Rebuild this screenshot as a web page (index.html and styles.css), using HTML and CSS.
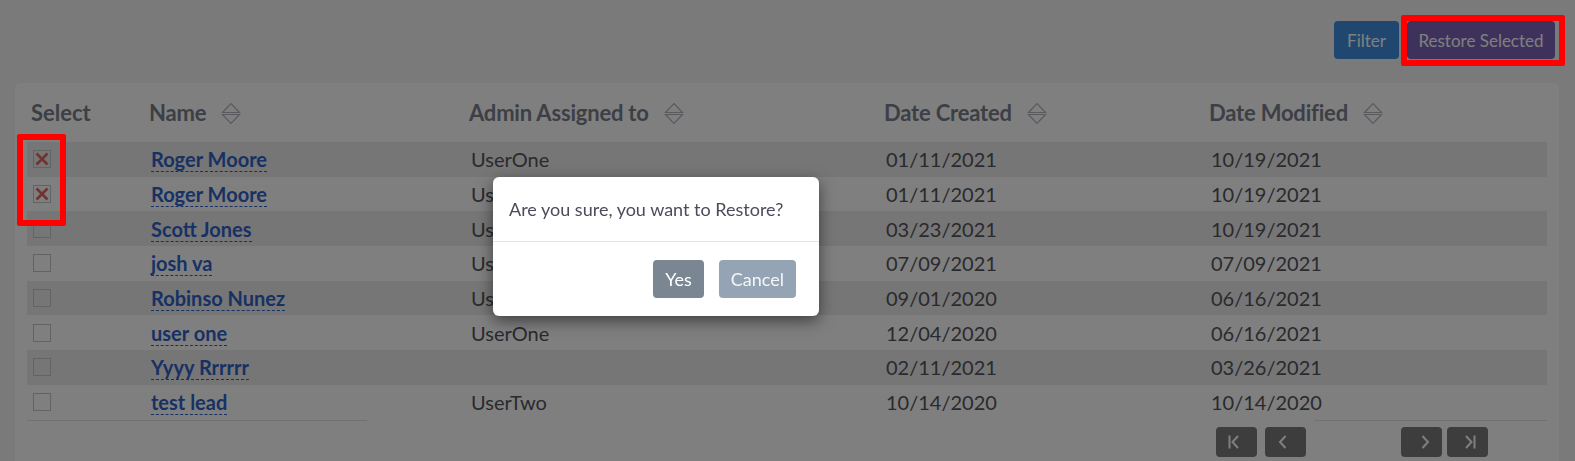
FILE: index.html
```html
<!DOCTYPE html>
<html lang="en">
<head>
<meta charset="utf-8">
<title>Deleted Leads</title>
<link rel="stylesheet" href="styles.css">
</head>
<body>
<div class="page">
  <div class="toolbar">
    <button class="btn btn-filter">Filter</button>
    <button class="btn btn-restore">Restore Selected</button>
  </div>
  <div class="card">
    <table class="grid">
      <colgroup>
        <col class="c-sel"><col class="c-name"><col class="c-admin"><col class="c-created"><col class="c-mod">
      </colgroup>
      <thead>
        <tr>
          <th class="th-sel">Select</th>
          <th><span class="th-in">Name<svg class="sort" viewBox="0 0 20 23"><path d="M1.5 10.5L10 1.5l8.5 9z M1.5 12.5L10 21.5l8.5-9z"/></svg></span></th>
          <th><span class="th-in">Admin Assigned to<svg class="sort" viewBox="0 0 20 23"><path d="M1.5 10.5L10 1.5l8.5 9z M1.5 12.5L10 21.5l8.5-9z"/></svg></span></th>
          <th><span class="th-in">Date Created<svg class="sort" viewBox="0 0 20 23"><path d="M1.5 10.5L10 1.5l8.5 9z M1.5 12.5L10 21.5l8.5-9z"/></svg></span></th>
          <th><span class="th-in">Date Modified<svg class="sort" viewBox="0 0 20 23"><path d="M1.5 10.5L10 1.5l8.5 9z M1.5 12.5L10 21.5l8.5-9z"/></svg></span></th>
        </tr>
      </thead>
      <tbody>
        <tr>
          <td class="td-sel"><span class="cb checked"><svg viewBox="0 0 16 16"><path d="M2.5 2.5l11 11M13.5 2.5l-11 11"/></svg></span></td>
          <td class="td-name"><a class="lnk" href="#">Roger Moore</a></td>
          <td>UserOne</td><td>01/11/2021</td><td>10/19/2021</td>
        </tr>
        <tr>
          <td class="td-sel"><span class="cb checked"><svg viewBox="0 0 16 16"><path d="M2.5 2.5l11 11M13.5 2.5l-11 11"/></svg></span></td>
          <td class="td-name"><a class="lnk" href="#">Roger Moore</a></td>
          <td>UserOne</td><td>01/11/2021</td><td>10/19/2021</td>
        </tr>
        <tr>
          <td class="td-sel"><span class="cb"></span></td>
          <td class="td-name"><a class="lnk" href="#">Scott Jones</a></td>
          <td>UserOne</td><td>03/23/2021</td><td>10/19/2021</td>
        </tr>
        <tr>
          <td class="td-sel"><span class="cb"></span></td>
          <td class="td-name"><a class="lnk" href="#">josh va</a></td>
          <td>UserOne</td><td>07/09/2021</td><td>07/09/2021</td>
        </tr>
        <tr>
          <td class="td-sel"><span class="cb"></span></td>
          <td class="td-name"><a class="lnk" href="#">Robinso Nunez</a></td>
          <td>UserOne</td><td>09/01/2020</td><td>06/16/2021</td>
        </tr>
        <tr>
          <td class="td-sel"><span class="cb"></span></td>
          <td class="td-name"><a class="lnk" href="#">user one</a></td>
          <td>UserOne</td><td>12/04/2020</td><td>06/16/2021</td>
        </tr>
        <tr>
          <td class="td-sel"><span class="cb"></span></td>
          <td class="td-name"><a class="lnk" href="#">Yyyy Rrrrrr</a></td>
          <td></td><td>02/11/2021</td><td>03/26/2021</td>
        </tr>
        <tr>
          <td class="td-sel"><span class="cb"></span></td>
          <td class="td-name"><a class="lnk" href="#">test lead</a></td>
          <td>UserTwo</td><td>10/14/2020</td><td>10/14/2020</td>
        </tr>
      </tbody>
    </table>
    <div class="foot">
      <div class="rules"><span class="rule rule-l"></span><span class="rule rule-r"></span></div>
      <div class="pager">
        <button class="pg pg-first"><svg viewBox="0 0 14 14"><path d="M2.5 0.5v13M11 1L5.5 7l5.5 6"/></svg></button>
        <button class="pg pg-prev"><svg viewBox="0 0 14 14"><path d="M9.5 1L4 7l5.5 6"/></svg></button>
        <span class="pg-info"></span>
        <button class="pg pg-next"><svg viewBox="0 0 14 14"><path d="M4.5 1L10 7l-5.5 6"/></svg></button>
        <button class="pg pg-last"><svg viewBox="0 0 14 14"><path d="M3 1L8.5 7 3 13M11.5 0.5v13"/></svg></button>
      </div>
    </div>
  </div>
</div>

<div class="backdrop"></div>

<div class="modal" role="dialog">
  <div class="modal-head">Are you sure, you want to Restore?</div>
  <div class="modal-foot">
    <button class="mbtn mbtn-yes">Yes</button>
    <button class="mbtn mbtn-cancel">Cancel</button>
  </div>
</div>

<div class="mark mark-checks"></div>
<div class="mark mark-restore"></div>
</body>
</html>
```

FILE: styles.css
```css
html, body {
  overflow: hidden;
}
body {
  margin: 0;
  background: #f4f4f4;
  font-family: Lato, "Open Sans", "Liberation Sans", sans-serif;
}

.toolbar {
  display: flex;
  justify-content: flex-end;
  gap: 8px;
  padding: 21px 20px 0 0;
}
.btn {
  height: 38px;
  padding: 0 12px;
  border: 0;
  border-radius: 4px;
  font-family: Lato, "Open Sans", sans-serif;
  font-size: 17px;
  color: #ffffff;
}
.btn-filter {
  background: #3f8fe0;
  width: 65px;
  padding: 0;
}
.btn-restore {
  background: #7c64b8;
  width: 148px;
  padding: 0;
}

.card {
  margin: 24px 16px 0 15px;
  background: #ffffff;
  border-radius: 5px;
  padding: 12px 12px 40px;
}

.grid {
  width: 100%;
  border-collapse: collapse;
  table-layout: fixed;
}
.c-sel { width: 119px; }
.c-name { width: 320px; }
.c-admin { width: 415px; }
.c-created { width: 325px; }
.c-mod { width: 341px; }

.grid th {
  text-align: left;
  font-weight: 700;
  font-size: 22px;
  line-height: 26px;
  color: #7a7e8c;
  padding: 5px 0 16px 3px;
  white-space: nowrap;
  letter-spacing: -0.2px;
}
.grid th.th-sel {
  padding-left: 4px;
  letter-spacing: 0;
}
.th-in {
  display: inline-flex;
  align-items: center;
}
.sort {
  width: 20px;
  height: 23px;
  margin-left: 15px;
  fill: none;
  stroke: #b2b4ba;
  stroke-width: 1.2;
}

.grid tbody tr {
  height: 34.7px;
}
.grid tbody tr:nth-child(odd) {
  background: #ececec;
}
.grid td {
  padding: 0 0 0 5px;
  font-size: 20px;
  line-height: 24px;
  color: #55545c;
  vertical-align: middle;
  white-space: nowrap;
}
.grid td.td-sel {
  padding-left: 6px;
}
.grid td.td-name {
  padding-left: 5px;
}
.lnk {
  color: #3163c8;
  font-weight: 700;
  text-decoration: none;
  border-bottom: 1px dashed #3163c8;
}

.cb {
  display: block;
  width: 18px;
  height: 18px;
  box-sizing: border-box;
  border: 1px solid #c6c6c6;
  background: transparent;
}
.cb svg {
  display: block;
  width: 16px;
  height: 16px;
  fill: none;
  stroke: #e0675f;
  stroke-width: 2.6;
}

.foot {
  display: flex;
  flex-direction: column;
}
.rules {
  display: flex;
  height: 1px;
}
.rule {
  display: block;
  height: 1px;
  background: #e2e2e2;
}
.rule-l { width: 340px; }
.rule-r { width: 233px; margin-left: auto; }

.pager {
  display: flex;
  justify-content: flex-end;
  padding: 6px 59px 0 0;
}
.pg {
  width: 41px;
  height: 30px;
  border: 0;
  border-radius: 4px;
  background: #7a7a7a;
  padding: 0;
  display: flex;
  align-items: center;
  justify-content: center;
}
.pg svg {
  width: 14px;
  height: 14px;
  fill: none;
  stroke: #ffffff;
  stroke-width: 2;
}
.pg-first svg { margin-right: 5px; }
.pg-prev { margin-left: 8px; }
.pg-prev svg { margin-right: 5px; }
.pg-info { width: 95px; }
.pg-next svg { margin-left: 6px; }
.pg-last { margin-left: 5px; }
.pg-last svg { margin-left: 4px; }

.backdrop {
  position: fixed;
  inset: 0;
  background: rgba(0, 0, 0, 0.5);
  z-index: 10;
}

.modal {
  position: fixed;
  left: 493px;
  top: 177px;
  width: 326px;
  background: #ffffff;
  border-radius: 6px;
  box-shadow: 0 5px 15px rgba(0, 0, 0, 0.5);
  z-index: 20;
}
.modal-head {
  padding: 19px 16px 18px;
  font-size: 18px;
  line-height: 27px;
  color: #4b4b5c;
  border-bottom: 1px solid #e5e5e5;
}
.modal-foot {
  display: flex;
  justify-content: flex-end;
  gap: 15px;
  padding: 18px 23px 18px 0;
}
.mbtn {
  height: 38px;
  padding: 0 12px;
  border: 0;
  border-radius: 4px;
  font-family: Lato, "Open Sans", sans-serif;
  font-size: 18px;
  color: #ffffff;
}
.mbtn-yes { background: #7a8692; }
.mbtn-cancel { background: #94a4b5; color: #f4f6f8; }

.mark {
  position: fixed;
  border: 6px solid #ff0000;
  border-radius: 2px;
  z-index: 30;
  box-sizing: border-box;
}
.mark-checks {
  left: 17px;
  top: 134px;
  width: 49px;
  height: 92px;
}
.mark-restore {
  left: 1401px;
  top: 15px;
  width: 164px;
  height: 51px;
}
```
